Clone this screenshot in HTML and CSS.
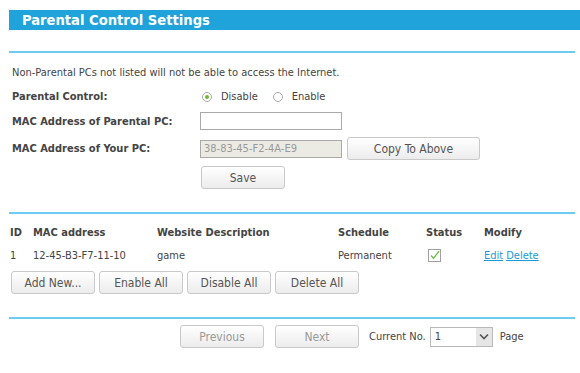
FILE: index.html
```html
<!DOCTYPE html>
<html>
<head>
<meta charset="utf-8">
<link rel="stylesheet" href="styles.css">
</head>
<body>
<div class="page">
  <div class="title">Parental Control Settings</div>
  <div class="rule rule-top"></div>

  <div class="form">
    <div class="note">Non-Parental PCs not listed will not be able to access the Internet.</div>
    <div class="row r-radio">
      <div class="label">Parental Control:</div>
      <div class="ctrl">
        <span class="radio on"></span><span class="rlabel">Disable</span>
        <span class="radio"></span><span class="rlabel">Enable</span>
      </div>
    </div>
    <div class="row r-mac1">
      <div class="label">MAC Address of Parental PC:</div>
      <div class="ctrl"><span class="input"></span></div>
    </div>
    <div class="row r-mac2">
      <div class="label">MAC Address of Your PC:</div>
      <div class="ctrl"><span class="input disabled">38-83-45-F2-4A-E9</span><span class="btn copy">Copy To Above</span></div>
    </div>
    <div class="row r-save">
      <div class="label"></div>
      <div class="ctrl"><span class="btn save">Save</span></div>
    </div>
  </div>

  <div class="rule rule-mid"></div>

  <div class="table">
    <div class="th">ID</div><div class="th">MAC address</div><div class="th">Website Description</div><div class="th">Schedule</div><div class="th">Status</div><div class="th">Modify</div>
    <div class="td">1</div><div class="td">12-45-B3-F7-11-10</div><div class="td">game</div><div class="td">Permanent</div>
    <div class="td"><span class="check"><svg width="13" height="13" viewBox="0 0 13 13"><rect x="0.5" y="0.5" width="12" height="12" fill="#fff" stroke="#a0a0a0"/><path d="M3 6.5 L5.5 9.5 L11 2" fill="none" stroke="#6cc04a" stroke-width="1.3"/></svg></span></div>
    <div class="td"><a class="link">Edit</a> <a class="link">Delete</a></div>
  </div>

  <div class="btnrow">
    <span class="btn">Add New...</span>
    <span class="btn">Enable All</span>
    <span class="btn">Disable All</span>
    <span class="btn">Delete All</span>
  </div>

  <div class="rule rule-bot"></div>

  <div class="pager">
    <span class="btn dim">Previous</span>
    <span class="btn dim next">Next</span>
    <span class="cur">Current No.</span>
    <span class="select"><span class="sval">1</span><span class="arrow"><svg width="10" height="7" viewBox="0 0 10 7"><path d="M1 1.5 L5 5.5 L9 1.5" fill="none" stroke="#555" stroke-width="1.6"/></svg></span></span>
    <span class="pg">Page</span>
  </div>
</div>
</body>
</html>
```
FILE: styles.css
```css
html, body {
  margin: 0;
  padding: 0;
  background: #fff;
}
body {
  font-family: "DejaVu Sans Condensed", "DejaVu Sans", sans-serif;
  font-size: 11px;
  color: #444;
}
.page {
  width: 580px;
  padding-top: 10px;
}
.title {
  margin-left: 9px;
  height: 20px;
  line-height: 20px;
  background: #1fa3da;
  color: #fff;
  font-weight: bold;
  font-size: 14.6px;
  padding-left: 13px;
}
.rule {
  margin-left: 9px;
  width: 566px;
  height: 0;
  border-top: 2px solid #6ccbf0;
}
.rule-top { margin-top: 21px; }
.form {
  padding-left: 12px;
}
.note {
  margin-top: 12px;
  height: 15px;
  line-height: 15px;
}
.row {
  display: flex;
  align-items: center;
}
.label {
  width: 188px;
  font-weight: bold;
}
.ctrl {
  display: flex;
  align-items: center;
}
.r-radio { margin-top: 9px; height: 15px; }
.r-mac1 { margin-top: 8px; height: 18px; }
.r-mac2 { margin-top: 7px; height: 23px; }
.r-save { margin-top: 6px; height: 23px; }
.radio {
  width: 10px;
  height: 10px;
  border: 1px solid #a8a8a8;
  border-radius: 50%;
  box-sizing: border-box;
  margin-left: 2px;
  margin-right: 9px;
  position: relative;
}
.radio.on::after {
  content: "";
  position: absolute;
  left: 2px;
  top: 2px;
  width: 4px;
  height: 4px;
  border-radius: 50%;
  background: #6cbb2e;
}
.rlabel { margin-right: 13px; }
.input {
  width: 142px;
  height: 18px;
  box-sizing: border-box;
  border: 1px solid #a9a9a9;
  background: #fff;
  display: inline-flex;
  align-items: center;
  padding-left: 3px;
}
.input.disabled {
  background: #ebebe4;
  color: #999;
}
.btn {
  display: inline-flex;
  align-items: center;
  justify-content: center;
  width: 84px;
  height: 23px;
  box-sizing: border-box;
  border: 1px solid #c9c9c9;
  border-radius: 3px;
  background: linear-gradient(#ffffff, #ececec);
  color: #555;
  font-size: 12px;
}
.btn.copy {
  width: 133px;
  margin-left: 5px;
}
.btn.save { margin-left: 1px; }
.rule-mid { margin-top: 23px; }
.table {
  display: grid;
  grid-template-columns: 23px 124px 181px 88px 58px 80px;
  padding-left: 10px;
  margin-top: 10px;
}
.th {
  font-weight: bold;
  height: 18px;
  line-height: 18px;
}
.td {
  height: 26px;
  display: flex;
  align-items: center;
}
.check { display: inline-flex; margin-left: 2px; }
.link {
  color: #1a9ad6;
  text-decoration: underline;
  margin-right: 3px;
}
.btnrow {
  display: flex;
  gap: 4px;
  padding-left: 11px;
  margin-top: 3px;
}
.rule-bot { margin-top: 23px; }
.pager {
  display: flex;
  align-items: center;
  padding-left: 180px;
  margin-top: 6px;
}
.btn.dim { color: #999; }
.btn.next { margin-left: 11px; }
.cur { margin-left: 10px; }
.select {
  margin-left: 4px;
  width: 63px;
  height: 20px;
  box-sizing: border-box;
  border: 1px solid #b8b8b8;
  display: inline-flex;
  align-items: center;
  justify-content: space-between;
}
.sval { padding-left: 4px; }
.arrow {
  width: 16px;
  height: 18px;
  background: #e6e6e6;
  display: inline-flex;
  align-items: center;
  justify-content: center;
}
.pg { margin-left: 7px; }
```
